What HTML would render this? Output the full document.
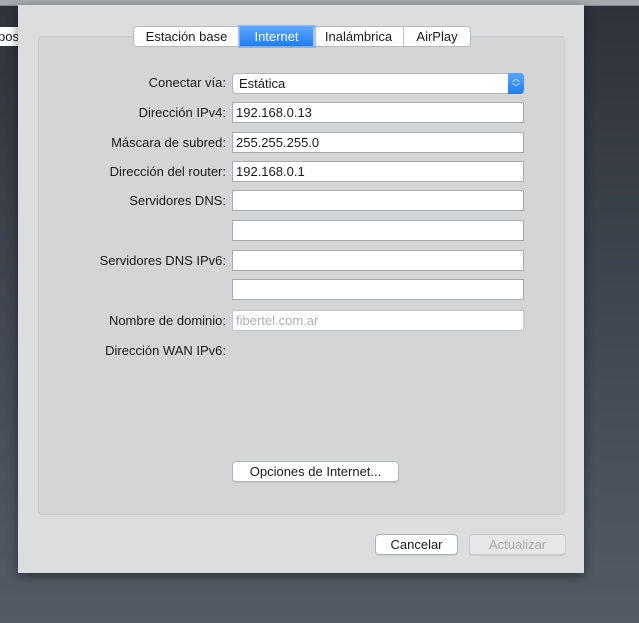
<!DOCTYPE html>
<html><head><meta charset="utf-8"><style>
body{margin:0;width:639px;height:623px;overflow:hidden;position:relative;font-family:"Liberation Sans",sans-serif;font-size:13px;color:#1a1a1a;
background:linear-gradient(180deg,#2e323a 0%,#3d434c 40%,#535b65 100%);}
.top{position:absolute;left:0;top:0;width:639px;height:5px;background:#a9a9ad;border-bottom:1px solid #8a8a8e}
.pos{position:absolute;left:0;top:27px;width:18px;height:19px;background:#fff;font-size:13px;line-height:19px;overflow:hidden;white-space:nowrap;text-indent:-2px}
.sheet{position:absolute;left:18px;top:5px;width:566px;height:568px;background:#dcdddf;box-shadow:0 3px 10px rgba(0,0,0,.45)}
.panel{position:absolute;left:20px;top:31px;width:525px;height:477px;background:#d4d5d7;border:1px solid #c9cacc;border-radius:4px}
.tabs{position:absolute;left:115px;top:21px;height:19px;display:flex;background:#fff;border:1px solid #b9b9bb;border-radius:4px;overflow:visible}
.tabs div{line-height:19px;text-align:center;border-right:1px solid #c4c4c6}
.tabs div:last-child{border-right:none}
.tabs .on{background:linear-gradient(#5aa6fb,#1f7ef5);color:#fff;box-shadow:0 0 0 2px rgba(90,160,250,.6)}
.lbl{position:absolute;right:358px;text-align:right;white-space:nowrap}
.fld{position:absolute;left:214px;width:287px;height:19px;background:#fff;border:1px solid #a9a9a9;line-height:19px;padding-left:3px;box-sizing:content-box}
.btn{position:absolute;height:19px;background:#fff;border:1px solid #b3b3b5;border-radius:4px;text-align:center;line-height:19px;box-shadow:0 1px 0 rgba(0,0,0,.08)}
</style></head><body>
<div class="top"></div>
<div class="pos">pos</div>
<div class="sheet">
<div class="panel"></div>
<div class="tabs">
<div style="width:105px">Estación base</div>
<div class="on" style="width:73px">Internet</div>
<div style="width:89px">Inalámbrica</div>
<div style="width:66px">AirPlay</div>
</div>
<div class="lbl" style="top:70px">Conectar vía:</div>
<div class="fld" style="top:68px;border-radius:4px;border-color:#b5b5b5;width:284px;padding-left:6px">Estática
<div style="position:absolute;right:-1px;top:-1px;width:16px;height:21px;background:linear-gradient(#5aa6fb,#1f7ef5);border-radius:0 4px 4px 0;color:#fff;font-size:8px;line-height:9px;text-align:center;padding-top:1px;box-sizing:border-box">︿<br>﹀</div></div>
<div class="lbl" style="top:100px">Dirección IPv4:</div>
<div class="fld" style="top:97px">192.168.0.13</div>
<div class="lbl" style="top:130px">Máscara de subred:</div>
<div class="fld" style="top:127px">255.255.255.0</div>
<div class="lbl" style="top:159px">Dirección del router:</div>
<div class="fld" style="top:156px">192.168.0.1</div>
<div class="lbl" style="top:188px">Servidores DNS:</div>
<div class="fld" style="top:185px"></div>
<div class="fld" style="top:215px"></div>
<div class="lbl" style="top:248px">Servidores DNS IPv6:</div>
<div class="fld" style="top:245px"></div>
<div class="fld" style="top:274px"></div>
<div class="lbl" style="top:308px">Nombre de dominio:</div>
<div class="fld" style="top:305px;color:#b0b0b0;border-color:#c4c4c4">fibertel.com.ar</div>
<div class="lbl" style="top:338px">Dirección WAN IPv6:</div>
<div class="btn" style="left:214px;top:456px;width:165px">Opciones de Internet...</div>
<div class="btn" style="left:357px;top:529px;width:81px">Cancelar</div>
<div class="btn" style="left:451px;top:529px;width:95px;background:#e6e7e9;color:#a9a9ab;border-color:#c9c9cb">Actualizar</div>
</div>
</body></html>
